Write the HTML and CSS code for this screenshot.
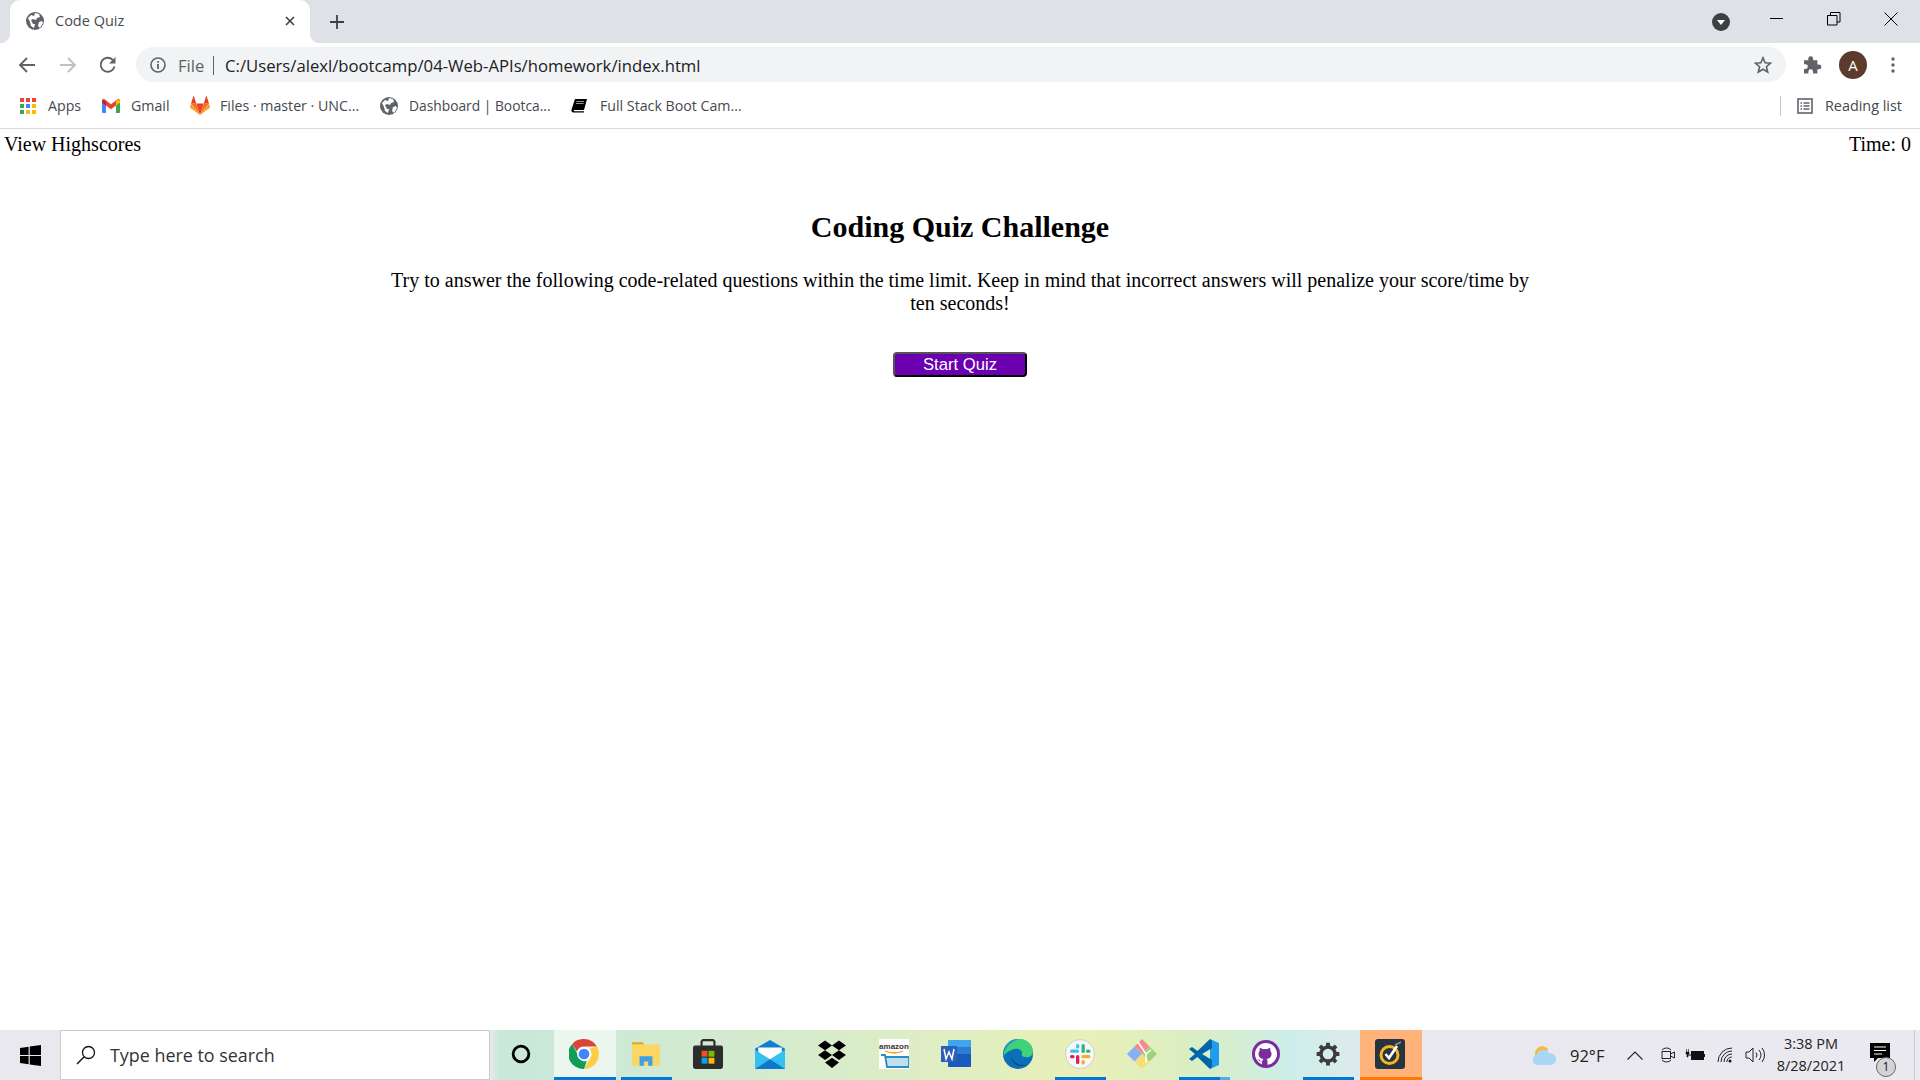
FILE: index.html
```html
<!DOCTYPE html>
<html lang="en">
<head>
<meta charset="utf-8">
<title>Code Quiz</title>
<link rel="stylesheet" href="styles.css">
</head>
<body>
<svg class="defs" width="0" height="0" aria-hidden="true"><defs>
<symbol id="globe" viewBox="0 0 18 18"><circle cx="9" cy="9" r="9" fill="#5f6368"/><path d="M2 6l3-3 3 1 1-3 4 1 1 3-3 1-1 2-3-1-2 1 2 4 2 0-1 4-3-2-1-4zM13 10l3-1 1 2-3 5-2-2z" fill="#fff"/></symbol>
</defs></svg>

<header class="tabstrip">
  <div class="tab">
    <svg class="ico18 tab-fav"><use href="#globe"/></svg>
    <span class="tab-title">Code Quiz</span>
    <svg class="tab-close" viewBox="0 0 10 10"><path d="M1 1l8 8M9 1l-8 8" stroke="#3c4043" stroke-width="1.6" fill="none"/></svg>
  </div>
  <svg class="newtab" viewBox="0 0 14 14"><path d="M7 0v14M0 7h14" stroke="#3c4043" stroke-width="1.8" fill="none"/></svg>
  <span class="strip-space"></span>
  <svg class="tabsearch" viewBox="0 0 18 18"><circle cx="9" cy="9" r="9" fill="#3c4043"/><path d="M5 7h8l-4 5z" fill="#fff"/></svg>
  <div class="winctl">
    <svg viewBox="0 0 14 14"><path d="M0 6.5h13" stroke="#000" fill="none"/></svg>
    <svg viewBox="0 0 14 14"><path d="M.5 3.5h9.5v9.5H.5zM3.5 3.500V.5h9.500v9.500h-3" stroke="#000" fill="none"/></svg>
    <svg viewBox="0 0 14 14"><path d="M.5.500l13 13M13.500.5l-13 13" stroke="#000" fill="none"/></svg>
  </div>
</header>

<nav class="toolbar">
  <svg class="navbtn" viewBox="0 0 18 18"><path d="M17 9H2M9 2L2 9l7 7" stroke="#5f6368" stroke-width="1.900" fill="none"/></svg>
  <svg class="navbtn" viewBox="0 0 18 18"><path d="M1 9h15M9 2l7 7-7 7" stroke="#bdc1c6" stroke-width="1.900" fill="none"/></svg>
  <svg class="navbtn nav-reload" viewBox="0 0 18 18"><path d="M15.500 10.500A7 7 0 1 1 13.800 3.900" stroke="#5f6368" stroke-width="1.900" fill="none"/><path d="M16.500 1v6.500H10z" fill="#5f6368"/></svg>
  <div class="omnibox">
    <svg class="info" viewBox="0 0 16 16"><circle cx="8" cy="8" r="7" stroke="#5f6368" stroke-width="1.600" fill="none"/><path d="M8 7v5M8 4v1.800" stroke="#5f6368" stroke-width="1.800"/></svg>
    <span class="scheme">File</span>
    <span class="omni-sep"></span>
    <span class="url">C:/Users/alexl/bootcamp/04-Web-APIs/homework/index.html</span>
    <span class="strip-space"></span>
    <svg class="star" viewBox="0 0 18 18"><path d="M9 1.800l2.100 5 5.400.4-4.100 3.500 1.300 5.300L9 13.200 4.300 16l1.300-5.300L1.500 7.200l5.400-.4z" stroke="#5f6368" stroke-width="1.600" fill="none"/></svg>
  </div>
  <svg class="puzzle" viewBox="0 0 18 18"><path d="M1 5h4V3.500a2.300 2.300 0 0 1 4.600 0V5h4v4h1.500a2.300 2.300 0 0 1 0 4.600h-1.500V17.500H9.500v-1.700a2.200 2.200 0 0 0-4.400 0v1.700H1v-4.300h1.400a2.200 2.200 0 0 0 0-4.400H1z" fill="#5f6368"/></svg>
  <span class="avatar">A</span>
  <svg class="kebab" viewBox="0 0 4 16"><circle cx="2" cy="2" r="1.700"/><circle cx="2" cy="8" r="1.700"/><circle cx="2" cy="14" r="1.700"/></svg>
</nav>

<div class="bookmarks">
  <div class="bm bm-apps">
    <svg class="apps-ico" viewBox="0 0 16 16">
      <path fill="#ea4335" d="M0 0h4v4H0z"/><path fill="#ea4335" d="M6 0h4v4H6z"/><path fill="#ea4335" d="M12 0h4v4h-4z"/>
      <path fill="#34a853" d="M0 6h4v4H0z"/><path fill="#4285f4" d="M6 6h4v4H6z"/><path fill="#fbbc04" d="M12 6h4v4h-4z"/>
      <path fill="#34a853" d="M0 12h4v4H0z"/><path fill="#fbbc04" d="M6 12h4v4H6z"/><path fill="#fbbc04" d="M12 12h4v4h-4z"/>
    </svg>
    <span>Apps</span>
  </div>
  <div class="bm bm-gmail">
    <svg class="gm-ico" viewBox="0 0 18 14">
      <path fill="#4285f4" d="M0 2h4v12H1a1 1 0 0 1-1-1z"/><path fill="#34a853" d="M14 5l4-3v11a1 1 0 0 1-1 1h-3z"/>
      <path fill="#ea4335" d="M0 1.500C0 0 1.500-.5 2.500.300L9 5.200 15.500.3C16.500-.5 18 0 18 1.500V3.500l-4 3-5 3.700-5-3.700-4-3z"/>
      <path fill="#fbbc04" d="M14 1.800l3-1.500 1 1.500v2l-4 3z"/><path fill="#c5221f" d="M0 1.500L4 2v4.500l-4-3z"/>
    </svg>
    <span>Gmail</span>
  </div>
  <div class="bm bm-gitlab">
    <svg class="gl-ico" viewBox="0 0 20 19">
      <path fill="#e24329" d="M10 19L6.300 7.500h7.400z"/><path fill="#fc6d26" d="M10 19L1 7.500h5.300z"/><path fill="#fca326" d="M1 7.500L0 11c-.1.400 0 .8.400 1L10 19z"/>
      <path fill="#e24329" d="M1 7.500h5.300L4 .4c-.1-.4-.7-.4-.8 0z"/><path fill="#fc6d26" d="M10 19l9-11.500h-5.300z"/><path fill="#fca326" d="M19 7.500l1 3.500c.1.400 0 .8-.4 1L10 19z"/>
      <path fill="#e24329" d="M19 7.500h-5.300L16 .4c.1-.4.700-.4.800 0z"/>
    </svg>
    <span>Files · master · UNC...</span>
  </div>
  <div class="bm bm-dash">
    <svg class="ico18"><use href="#globe"/></svg>
    <span class="dash-text">Dashboard | Bootca...</span>
  </div>
  <div class="bm bm-book">
    <svg class="book-ico" viewBox="0 0 16 14"><path d="M4 0h12l-3 11H3.500C2.800 11 2.500 12.300 3.300 12.300H13v1.200H2.500C.8 13.500 0 12 .5 10.500z" fill="#000"/><path d="M5.500 2.500h7.500M5 4.500h7.500" stroke="#fff" stroke-width=".6"/></svg>
    <span>Full Stack Boot Cam...</span>
  </div>
  <span class="strip-space"></span>
  <span class="bm-div"></span>
  <svg class="rl-ico" viewBox="0 0 16 16"><rect x="1" y="1" width="14" height="14" fill="none" stroke="#5f6368" stroke-width="1.600"/><path d="M3.500 5h1.500M3.500 8h1.500M3.500 11h1.500M6.500 5h6M6.500 8h6M6.500 11h6" stroke="#5f6368" stroke-width="1.300"/></svg>
  <span class="rl-text">Reading list</span>
</div>

<main class="page">
  <div class="page-head">
    <span>View Highscores</span>
    <span>Time: 0</span>
  </div>
  <section class="intro">
    <h1>Coding Quiz Challenge</h1>
    <p>Try to answer the following code-related questions within the time limit. Keep in mind that incorrect answers will penalize your score/time by ten seconds!</p>
    <button class="start" type="button">Start Quiz</button>
  </section>
</main>

<footer class="taskbar">
  <div class="startbtn">
    <svg class="win-ico" viewBox="0 0 20 20"><path d="M0 2.800L8.200 1.600V9.500H0zM9.300 1.500L20 0V9.500H9.300zM0 10.500H8.200V18.400L0 17.200zM9.300 10.500H20V20L9.300 18.500z"/></svg>
  </div>
  <div class="search">
    <svg class="mag" viewBox="0 0 20 20"><circle cx="12.500" cy="7.500" r="6" stroke="#111" stroke-width="1.300" fill="none"/><path d="M8 12L1 19" stroke="#111" stroke-width="1.500"/></svg>
    <span>Type here to search</span>
  </div>
  <div class="task">
    <svg class="t-ico t-small" viewBox="0 0 28 28"><circle cx="14" cy="14" r="10" stroke="#000" stroke-width="3.600" fill="none"/></svg>
  </div>
  <div class="task active">
    <svg class="t-ico" viewBox="0 0 28 28"><path d="M14 0a14 14 0 0 1 12.100 7H14a7 7 0 0 0-6.600 4.700L3 4.600A14 14 0 0 1 14 0z" fill="#db4437"/><path d="M26.100 7A14 14 0 0 1 14 28l6.100-10.500A7 7 0 0 0 19 9z" fill="#ffcd40"/><path d="M14 28A14 14 0 0 1 3 4.600l5.800 11A7 7 0 0 0 14 21l2.600-.5z" fill="#0f9d58"/><circle cx="14" cy="14" r="6.400" fill="#fff"/><circle cx="14" cy="14" r="5" fill="#4285f4"/></svg>
  </div>
  <div class="task open">
    <svg class="t-ico" viewBox="0 0 28 28"><path d="M1 3h10l2 3H1z" fill="#e5a51f"/><path d="M1 5h26v20H1z" fill="#fcd665"/><path d="M8 25v-9h12v9h-4v-4h-4v4z" fill="#3f9fe4"/></svg>
  </div>
  <div class="task">
    <svg class="t-ico" viewBox="0 0 28 28"><path d="M8 8V3.500A2 2 0 0 1 10 1h8a2 2 0 0 1 2 2.500V8" stroke="#2c2c2c" stroke-width="2" fill="none"/><rect x="0" y="6" width="28" height="22" rx="2" fill="#2d2d2d"/><path fill="#f25022" d="M8 11h5.500v5.500H8z"/><path fill="#7fba00" d="M14.500 11H20v5.500h-5.500z"/><path fill="#00a4ef" d="M8 17.500h5.500V23H8z"/><path fill="#ffb900" d="M14.500 17.500H20V23h-5.500z"/></svg>
  </div>
  <div class="task">
    <svg class="t-ico" viewBox="0 0 28 28"><path d="M0 9L14 1l14 8v18H0z" fill="#0f7fd3"/><path d="M3 8h22v7l-11 6-11-6z" fill="#fff"/><path d="M0 10l14 9 14-9v18H0z" fill="#36c0f2"/><path d="M0 28l14-9 14 9z" fill="#0f78cc"/></svg>
  </div>
  <div class="task">
    <svg class="t-ico" viewBox="0 0 28 28"><path d="M7.500 1.500L14 6 7.500 10.500 1 6zM20.500 1.500L27 6l-6.500 4.500L14 6zM7.500 10.500L14 15l-6.500 4.500L1 15zM20.500 10.500L27 15l-6.500 4.500L14 15zM14 17.500l6.500 4.500L14 27l-6.500-5z"/></svg>
  </div>
  <div class="task">
    <svg class="t-ico" viewBox="0 0 30 30"><rect width="30" height="30" fill="#fff"/><text class="amz" x="15" y="10" text-anchor="middle">amazon</text><path d="M6 12q9 4 18 0" stroke="#f90" stroke-width="1.300" fill="none"/><path d="M2 16h4l2 12h22v-10H7" stroke="#2a8dc5" stroke-width="1.800" fill="#bfe0f0"/></svg>
  </div>
  <div class="task">
    <svg class="t-ico" viewBox="0 0 30 30"><rect x="7" y="1" width="23" height="27" rx="1" fill="#185abd"/><rect x="7" y="1" width="23" height="7" fill="#41a5ee"/><rect x="7" y="8" width="23" height="7" fill="#2b7cd3"/><rect x="7" y="15" width="23" height="7" fill="#185abd"/><rect x="0" y="7" width="16" height="16" fill="#2b5fb9"/><path d="M3 10l2 10 3-7 3 7 2-10" stroke="#fff" stroke-width="1.500" fill="none"/></svg>
  </div>
  <div class="task">
    <svg class="t-ico" viewBox="0 0 30 30"><circle cx="15" cy="15" r="15" fill="#0d6fb8"/><path d="M1 12C3 3 12 0 17 0c7 0 13 6 13 12 0 5-4 7-8 6-2 0-4-1-3-3 1-3-3-6-8-5C7 11 3 13 1 17z" fill="#3fd27a"/><path d="M1 12C3 3 12 0 17 0c-6 1-13 6-15 13z" fill="#21a0c8"/><path d="M8 17c0 6 5 10 10 10 3 0 5-1 7-2-8 3-15-1-17-8z" fill="#0a4a86"/></svg>
  </div>
  <div class="task open">
    <svg class="t-ico" viewBox="0 0 30 30"><circle cx="15" cy="15" r="14.500" fill="#f8f8f8" stroke="#ccc"/><rect x="5" y="10.500" width="9" height="3.300" rx="1.600" fill="#36c5f0"/><rect x="11" y="5" width="3.300" height="4.500" rx="1.600" fill="#36c5f0"/><rect x="16.500" y="5" width="3.300" height="9" rx="1.600" fill="#2eb67d"/><rect x="21" y="10.500" width="4.500" height="3.300" rx="1.600" fill="#2eb67d"/><rect x="16.500" y="16" width="9" height="3.300" rx="1.600" fill="#ecb22e"/><rect x="16.500" y="21" width="3.300" height="4.500" rx="1.600" fill="#ecb22e"/><rect x="11" y="16" width="3.300" height="9" rx="1.600" fill="#e01e5a"/><rect x="5" y="16" width="4.500" height="3.300" rx="1.600" fill="#e01e5a"/></svg>
  </div>
  <div class="task">
    <svg class="t-ico" viewBox="0 0 30 30"><path d="M15 15L7.500 7.500 0 15l7.500 7.500z" fill="#86b0f5"/><path d="M15 15l7.500-7.500L30 15l-7.500 7.500z" fill="#9ed37c"/><path d="M15 15L7.500 22.500 15 30l7.500-7.500z" fill="#f6dd78"/><path d="M15 15L7.500 7.500 15 0l7.500 7.500z" fill="#f58a8a"/><path d="M11 3l8 12v9M19 15l5-4" stroke="#fff" stroke-width="1.500" fill="none"/></svg>
  </div>
  <div class="task open split">
    <svg class="t-ico" viewBox="0 0 30 30"><path d="M21 0l9 4v22l-9 4z" fill="#1f9cf0"/><path d="M21 0L8.500 12 3 8 0 10l6 5-6 5 3 2 5.500-4L21 30l2-2V21L13 15l10-6V2z" fill="#0065a9"/></svg>
  </div>
  <div class="task">
    <svg class="t-ico" viewBox="0 0 30 30"><circle cx="15" cy="15" r="14" fill="#7b2c9e"/><circle cx="15" cy="15" r="11" fill="#fff"/><path d="M11 26v-4c-3 .7-3.500-1-4-2 1 .3 2 1 2.500 2 1 .7 2 .3 2 0 0-1 .5-1.500 1-2-3-.5-5-2-5-5 0-1.300.5-2.400 1.200-3.200-.2-.8-.2-1.800.2-2.800 1 0 2 .5 3 1.200 1.300-.4 3-.4 4.200 0 1-.7 2-1.200 3-1.200.4 1 .4 2 .2 2.800.7.800 1.200 1.900 1.200 3.200 0 3-2 4.500-5 5 .6.500 1 1.200 1 2.300V26z" fill="#7b2c9e"/></svg>
  </div>
  <div class="task open">
    <svg class="t-ico t-gear" viewBox="0 0 24 24"><circle cx="12" cy="12" r="6.500" fill="none" stroke="#3c3c3c" stroke-width="3.200"/><path d="M12 1.500v4M12 18.500v4M1.500 12h4M18.500 12h4M4.600 4.600l2.800 2.800M16.600 16.600l2.800 2.800M4.600 19.400l2.800-2.800M16.600 7.400l2.800-2.800" stroke="#3c3c3c" stroke-width="3.600"/></svg>
  </div>
  <div class="task flash">
    <svg class="t-ico" viewBox="0 0 30 30"><rect width="30" height="30" rx="3" fill="#27343f"/><circle cx="14.500" cy="16" r="8.500" fill="none" stroke="#f3b61f" stroke-width="3"/><path d="M10.500 15l3.500 4 8-12" fill="none" stroke="#fff" stroke-width="2.600"/><path d="M20 6l6-3" stroke="#8b97a0" stroke-width="1.500"/></svg>
  </div>
  <span class="strip-space"></span>
  <div class="tray">
    <svg class="weather" viewBox="0 0 26 20"><path d="M5 11a7 7 0 0 1 12-7l-5 8z" fill="#f5b93e"/><path d="M7 19a5 5 0 0 1-1-9.800A6.500 6.500 0 0 1 18 8a5.500 5.500 0 0 1 2 11z" fill="#a9d8f4"/></svg>
    <span class="temp">92°F</span>
    <svg class="chev" viewBox="0 0 16 9"><path d="M.5 8.500L8 1l7.500 7.500" stroke="#222" stroke-width="1.100" fill="none"/></svg>
    <svg class="meet" viewBox="0 0 15 20"><path d="M1 5a6 6 0 0 1 9 0M1 15a6 6 0 0 0 9 0" stroke="#222" fill="none"/><rect x="1" y="6.500" width="8.500" height="7" fill="none" stroke="#222"/><path d="M9.500 9l4-2v6l-4-2" fill="none" stroke="#222"/></svg>
    <svg class="batt" viewBox="0 0 20 12"><path d="M1.500 0v3M3.500 0v3M1 3h3v2H3v3H2V5H1z" fill="#111" stroke="#111" stroke-width=".6"/><path d="M3 6h3" stroke="#111"/><rect x="6" y="2" width="13" height="9" fill="#111"/><rect x="19" y="5" width="1" height="3" fill="#111"/></svg>
    <svg class="wifi" viewBox="0 0 16 16"><path d="M1 15A14 14 0 0 1 15 1M4 15A11 11 0 0 1 15 4M7 15a8 8 0 0 1 8-8" stroke="#222" fill="none"/><path d="M9.800 15a5 5 0 0 1 5-5" stroke="#222" fill="none"/><circle cx="13" cy="14" r="1.500" fill="#111"/></svg>
    <svg class="spk" viewBox="0 0 20 16"><path d="M1 5h3l4-4v14l-4-4H1z" fill="none" stroke="#222"/><path d="M11 5.500a4 4 0 0 1 0 5M14 3a8 8 0 0 1 0 10M17 1a11 11 0 0 1 0 14" stroke="#222" fill="none"/></svg>
    <div class="clock"><span>3:38 PM</span><span>8/28/2021</span></div>
    <div class="notif">
      <svg class="notif-ico" viewBox="0 0 20 20"><path d="M0 0h20v15H8l-4 4v-4H0z"/><path d="M4 4h12M4 7.500h12M4 11h8" stroke="#fff"/></svg>
      <span class="badge">1</span>
    </div>
  </div>
</footer>
</body>
</html>
```

FILE: styles.css
```css
* { box-sizing: border-box; }
html, body { margin: 0; height: 100%; overflow: hidden; }
body {
  display: flex;
  flex-direction: column;
  width: 1920px;
  height: 1080px;
  background: #fff;
  font-family: "Liberation Serif", serif;
  color: #000;
}
.defs { position: absolute; }
.strip-space { flex: 1; }
.ico18 { width: 18px; height: 18px; flex: none; }

/* Tab strip */
.tabstrip {
  height: 43px;
  flex: none;
  display: flex;
  align-items: center;
  background: #dee1e6;
  padding-left: 10px;
  font-family: "Open Sans", sans-serif;
}
.tab {
  width: 300px;
  height: 43px;
  background: #fff;
  border-radius: 10px 10px 0 0;
  display: flex;
  align-items: center;
  padding: 0 14px 2px 16px;
  position: relative;
}
.tab::before, .tab::after {
  content: "";
  position: absolute;
  bottom: 0;
  width: 10px;
  height: 10px;
}
.tab::before { left: -10px; background: radial-gradient(circle at 0 0, transparent 10px, #fff 10.500px); }
.tab::after { right: -10px; background: radial-gradient(circle at 100% 0, transparent 10px, #fff 10.500px); }
.tab-title { margin-left: 11px; font-size: 14.500px; color: #45494d; flex: 1; }
.tab-close { width: 10px; height: 10px; margin-right: 1px; }
.newtab { width: 14px; height: 14px; margin-left: 20px; }
.tabsearch { width: 18px; height: 18px; margin-right: 40px; }
.winctl { display: flex; gap: 43px; margin-right: 22px; margin-top: -6px; }
.winctl svg { width: 14px; height: 14px; }

/* Toolbar */
.toolbar {
  height: 43px;
  flex: none;
  display: flex;
  align-items: center;
  padding-left: 18px;
  background: #fff;
  font-family: "Open Sans", sans-serif;
}
.navbtn { width: 18px; height: 18px; margin-right: 23px; }
.nav-reload { margin-left: -1px; margin-right: 24px; }
.omnibox {
  width: 1650px;
  height: 35px;
  margin-left: -5px;
  border-radius: 18px;
  background: #f1f3f4;
  display: flex;
  align-items: center;
  padding: 1px 14px 0 14px;
  font-size: 16.700px;
}
.info { width: 16px; height: 16px; }
.scheme { margin-left: 12px; color: #5f6368; width: 26px; }
.omni-sep { width: 1px; height: 19px; background: #5f6368; margin-left: 9px; }
.url { margin-left: 11px; color: #202124; }
.star { width: 18px; height: 18px; }
.puzzle { width: 19px; height: 19px; margin-left: 17px; }
.avatar {
  width: 28px;
  height: 28px;
  border-radius: 50%;
  margin-left: 17px;
  background: #5d3a2e;
  color: #fff;
  font-size: 15px;
  display: flex;
  align-items: center;
  justify-content: center;
}
.kebab { width: 4px; height: 16px; margin-left: 24px; fill: #5f6368; }

/* Bookmarks */
.bookmarks {
  height: 43px;
  flex: none;
  display: flex;
  align-items: center;
  padding: 0 18px 3px 20px;
  border-bottom: 1px solid #dadce0;
  background: #fff;
  font-family: "Open Sans", sans-serif;
  font-size: 14.200px;
  color: #45494d;
}
.bm { display: flex; align-items: center; flex: none; white-space: nowrap; }
.bm-apps { width: 82px; gap: 12px; }
.bm-gmail { width: 88px; gap: 11px; }
.bm-gitlab { width: 190px; gap: 10px; }
.bm-dash { width: 191px; gap: 11px; }
.dash-text { font-size: 13.800px; }
.bm-book { gap: 13px; }
.apps-ico { width: 16px; height: 16px; }
.gm-ico { width: 18px; height: 14px; }
.gl-ico { width: 20px; height: 19px; }
.book-ico { width: 16px; height: 14px; }
.bm-div { width: 1px; height: 20px; background: #c8cacd; margin-right: 16px; }
.rl-ico { width: 16px; height: 16px; margin-right: 12px; }
.rl-text { font-size: 14.400px; }

/* Page */
.page { flex: 1; }
.page-head {
  display: flex;
  justify-content: space-between;
  padding: 4px 9px 0 4px;
  font-size: 20px;
  line-height: 23px;
}
.intro { text-align: center; margin: 54px auto 0; width: 1152px; }
.intro h1 { margin: 0; font-size: 30px; line-height: 34px; font-weight: bold; }
.intro p { margin: 25px 0 0; font-size: 20px; line-height: 23px; }
.start {
  display: block;
  width: 134px;
  height: 25px;
  margin: 37px auto 0;
  padding: 0;
  background: #6a00b0;
  color: #fff;
  border: 2px outset #555;
  border-radius: 4px;
  font-family: "Liberation Sans", sans-serif;
  font-size: 16.670px;
}

/* Taskbar */
.taskbar {
  height: 50px;
  flex: none;
  display: flex;
  align-items: stretch;
  background: linear-gradient(90deg, #e8e8ee 0, #e8e8ee 490px, #c9e8da 500px, #d6ebcc 800px, #e9f0b8 1090px, #d9eec4 1200px, #cdeeea 1290px, #e8e8ee 1400px, #e9e9ef 1920px);
  font-family: "Open Sans", sans-serif;
}
.startbtn { width: 60px; display: flex; align-items: center; justify-content: center; }
.win-ico { width: 21px; height: 21px; }
.search {
  width: 430px;
  background: #fff;
  border: 1px solid #ccc;
  margin-right: 2px;
  display: flex;
  align-items: center;
  padding-left: 15px;
  gap: 14px;
  font-size: 17.900px;
  color: #333;
}
.mag { width: 20px; height: 20px; }
.task {
  width: 62px;
  flex: none;
  display: flex;
  align-items: center;
  justify-content: center;
  position: relative;
  padding: 0 2px 2px 0;
}
.t-ico { width: 30px; height: 30px; }
.t-small { width: 22px; height: 22px; margin-right: 3px; }
.t-gear { width: 26px; height: 26px; }
.amz { font-family: "Liberation Sans", sans-serif; font-size: 8px; font-weight: bold; fill: #333; }
.task.open::after, .task.active::after, .task.flash::after {
  content: "";
  position: absolute;
  bottom: 0;
  height: 3px;
  left: 5px;
  right: 6px;
  background: #0078d7;
}
.task.active { background: rgba(255, 255, 255, 0.6); }
.task.active::after { left: 0; right: 0; }
.task.split::after { background: linear-gradient(90deg, #0078d7 80%, #5da9e6 80%); }
.task.flash { background: #ffb27a; }
.task.flash::after { left: 0; right: 0; background: #ff7a00; }
.tray {
  display: flex;
  align-items: center;
  font-size: 16.500px;
  color: #222;
  border-right: 1px solid #ccc;
  margin-right: 5px;
}
.weather { width: 28px; height: 21px; }
.temp { margin-left: 12px; width: 41px; }
.chev { width: 16px; height: 9px; margin-left: 16px; }
.meet { width: 15px; height: 20px; margin-left: 18px; }
.batt { width: 20px; height: 12px; margin-left: 9px; }
.wifi { width: 16px; height: 16px; margin-left: 12px; }
.spk { width: 20px; height: 16px; margin-left: 12px; }
.clock { width: 82px; margin-left: 5px; display: flex; flex-direction: column; align-items: center; font-size: 14.500px; line-height: 22px; }
.notif { width: 40px; height: 40px; margin: 0 14px 0 8px; position: relative; display: flex; align-items: center; justify-content: center; }
.notif-ico { width: 20px; height: 20px; margin-top: -4px; }
.badge {
  position: absolute;
  right: 4px;
  bottom: -2px;
  width: 20px;
  height: 20px;
  border-radius: 50%;
  border: 1px solid #666;
  background: #d4d4d8;
  font-size: 12px;
  line-height: 18px;
  text-align: center;
  color: #111;
}
```
